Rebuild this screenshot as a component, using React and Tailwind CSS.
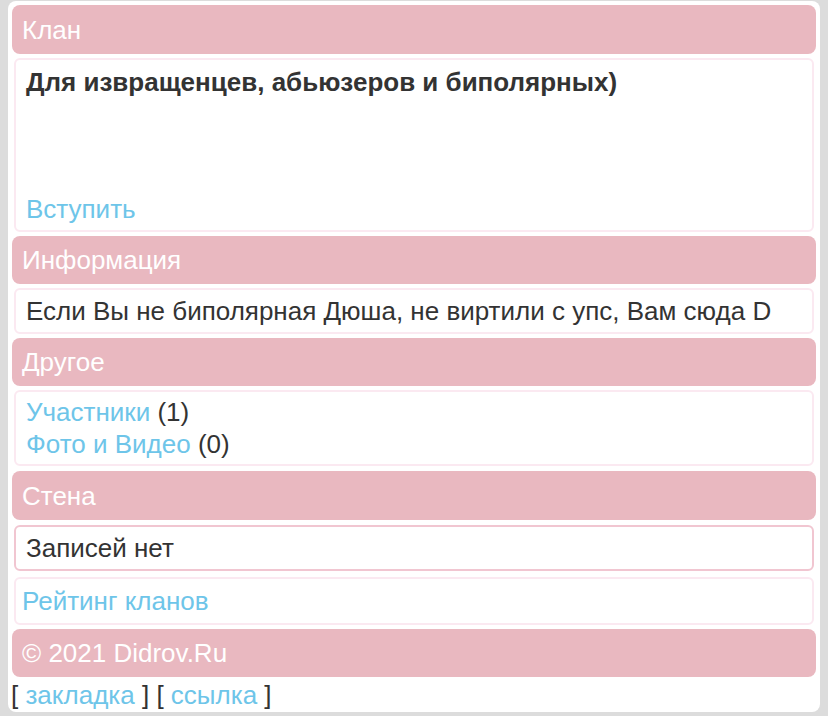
const Header = ({ children, className = "" }) => (
  <div className={`mx-1 rounded-lg bg-[#e9b8c0] px-2.5 flex items-center text-white ${className}`}>
    {children}
  </div>
);

const Box = ({ children, className = "" }) => (
  <div className={`mx-1.5 rounded-md border-2 bg-white ${className}`}>
    {children}
  </div>
);

const Link = ({ children }) => <a className="text-[#6ec5e9]">{children}</a>;

export default function App() {
  return (
    <div
      className="min-h-screen bg-[#dcdcdc] px-2 pt-px pb-1.5"
      style={{ fontFamily: '"Liberation Sans", Arial, sans-serif' }}
    >
      <div className="flex flex-col rounded-lg bg-white pt-1 text-[26px] text-[#333] leading-[32px]">
        <Header className="h-[49px]">Клан</Header>
        <Box className="mt-1 h-[174px] flex flex-col justify-between border-[#fbe9f1] pl-2.5 pt-1.5 pb-[5px]">
          <div className="font-bold">Для извращенцев, абьюзеров и биполярных)</div>
          <Link>Вступить</Link>
        </Box>
        <Header className="mt-1 h-[48px]">Информация</Header>
        <Box className="mt-1 border-[#fbe9f1] pl-2.5 py-[5px]">
          Если Вы не биполярная Дюша, не виртили с упс, Вам сюда D
        </Box>
        <Header className="mt-1 h-[48px]">Другое</Header>
        <Box className="mt-1 border-[#fbe9f1] pl-2.5 py-1">
          <div>
            <Link>Участники</Link> (1)
          </div>
          <div>
            <Link>Фото и Видео</Link> (0)
          </div>
        </Box>
        <Header className="mt-[5px] h-[49px]">Стена</Header>
        <Box className="mt-[5px] border-[#f1c6d1] pl-2.5 py-[5px]">Записей нет</Box>
        <Box className="mt-1.5 border-[#fbe9f1] pl-1.5 py-1.5">
          <Link>Рейтинг кланов</Link>
        </Box>
        <Header className="mt-1 h-[48px]">© 2021 Didrov.Ru</Header>
        <div className="pl-[3px] pt-0.5 pb-px">
          [ <Link>закладка</Link> ] [ <Link>ссылка</Link> ]
        </div>
      </div>
    </div>
  );
}
